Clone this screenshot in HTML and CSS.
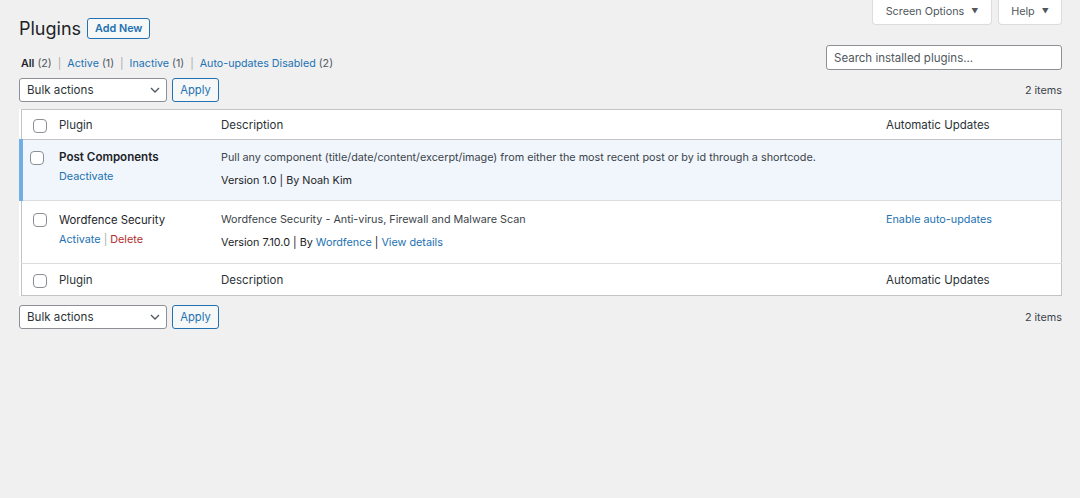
FILE: index.html
```html
<!DOCTYPE html>
<html lang="en">
<head>
<meta charset="utf-8">
<title>Plugins</title>
<link rel="stylesheet" href="styles.css">
</head>
<body>
<div class="page">
  <div class="head">
    <div class="head-left">
      <div class="title-row">
        <h1 class="title">Plugins</h1>
        <a class="btn-outline" href="#">Add New</a>
      </div>
      <ul class="subsubsub">
        <li><a class="current" href="#">All</a> <span class="count">(2)</span><span class="sep">|</span></li>
        <li><a href="#">Active</a> <span class="count">(1)</span><span class="sep">|</span></li>
        <li><a href="#">Inactive</a> <span class="count">(1)</span><span class="sep">|</span></li>
        <li><a href="#">Auto-updates Disabled</a> <span class="count">(2)</span></li>
      </ul>
    </div>
    <div class="head-right">
      <div class="meta-links">
        <button class="meta-btn meta-screen">Screen Options <span class="tri">▼</span></button>
        <button class="meta-btn meta-help">Help <span class="tri">▼</span></button>
      </div>
      <input class="search" type="search" placeholder="Search installed plugins...">
    </div>
  </div>

  <div class="tablenav top">
    <div class="select-wrap">
      <select class="select"><option>Bulk actions</option></select>
      <svg class="chev" viewBox="0 0 10 6" width="10" height="6"><path d="M1 1l4 4 4-4" fill="none" stroke="#50575e" stroke-width="1.3"/></svg>
    </div>
    <button class="btn-apply">Apply</button>
    <span class="items">2 items</span>
  </div>

  <table class="plugins">
    <colgroup>
      <col class="c-cb"><col class="c-name"><col class="c-desc"><col class="c-auto">
    </colgroup>
    <thead>
      <tr>
        <td class="cb"><input type="checkbox" class="chk"></td>
        <th class="hd">Plugin</th>
        <th class="hd">Description</th>
        <th class="hd">Automatic Updates</th>
      </tr>
    </thead>
    <tbody>
      <tr class="active">
        <th class="cb"><input type="checkbox" class="chk"></th>
        <td class="name">
          <strong class="pname">Post Components</strong>
          <div class="actions"><a href="#">Deactivate</a></div>
        </td>
        <td class="desc">
          <p class="d1">Pull any component (title/date/content/excerpt/image) from either the most recent post or by id through a shortcode.</p>
          <p class="d2">Version 1.0 | By Noah Kim</p>
        </td>
        <td class="auto"></td>
      </tr>
      <tr class="inactive">
        <th class="cb"><input type="checkbox" class="chk"></th>
        <td class="name">
          <span class="pname-in">Wordfence Security</span>
          <div class="actions"><a href="#">Activate</a> <span class="bar">|</span> <a class="del" href="#">Delete</a></div>
        </td>
        <td class="desc">
          <p class="d1">Wordfence Security - Anti-virus, Firewall and Malware Scan</p>
          <p class="d2">Version 7.10.0 | By <a href="#">Wordfence</a> | <a href="#">View details</a></p>
        </td>
        <td class="auto"><a href="#">Enable auto-updates</a></td>
      </tr>
    </tbody>
    <tfoot>
      <tr>
        <td class="cb"><input type="checkbox" class="chk"></td>
        <th class="hd">Plugin</th>
        <th class="hd">Description</th>
        <th class="hd">Automatic Updates</th>
      </tr>
    </tfoot>
  </table>

  <div class="tablenav bottom">
    <div class="select-wrap">
      <select class="select"><option>Bulk actions</option></select>
      <svg class="chev" viewBox="0 0 10 6" width="10" height="6"><path d="M1 1l4 4 4-4" fill="none" stroke="#50575e" stroke-width="1.3"/></svg>
    </div>
    <button class="btn-apply">Apply</button>
    <span class="items">2 items</span>
  </div>
</div>
</body>
</html>
```

FILE: styles.css
```css
* { box-sizing: border-box; }
html, body { margin: 0; padding: 0; }
body {
  background: #f0f0f1;
  color: #1d2327;
  font-family: Inter, "Liberation Sans", Arial, sans-serif;
  font-size: 10.8px;
  line-height: 16px;
}
a { color: #2271b1; text-decoration: none; }

.page { padding: 0 18px 0 19px; }

.head { display: flex; justify-content: space-between; align-items: flex-start; }
.head-left { padding-top: 18px; }
.title-row { display: flex; align-items: center; height: 21px; }
.title {
  margin: 0;
  font-size: 18px;
  font-weight: 400;
  line-height: 21px;
  color: #1d2327;
}
.btn-outline {
  margin-left: 6px;
  height: 21px;
  padding: 0 7px;
  display: inline-flex;
  align-items: center;
  border: 1px solid #2271b1;
  border-radius: 3px;
  background: #f6f7f7;
  font-weight: 600;
  font-size: 10.8px;
  color: #2271b1;
}
.subsubsub {
  list-style: none;
  margin: 17px 0 0 2px;
  padding: 0;
  display: flex;
  font-size: 10.7px;
  line-height: 16px;
  color: #646970;
}
.subsubsub li { white-space: nowrap; }
.subsubsub .current { color: #1d2327; font-weight: 600; }
.subsubsub .count { color: #50575e; }
.subsubsub .sep { color: #a7aaad; margin: 0 6px; }

.head-right { display: flex; flex-direction: column; align-items: flex-end; }
.meta-links { display: flex; gap: 6px; }
.meta-btn {
  height: 25px;
  border: 1px solid #dcdcde;
  border-top: none;
  border-radius: 0 0 4px 4px;
  background: #fff;
  color: #50575e;
  font-family: inherit;
  font-size: 10.8px;
  padding: 0 0 2px;
  cursor: pointer;
}
.meta-screen { width: 120px; }
.meta-help { width: 64px; }
.tri { font-size: 7px; margin-left: 4px; vertical-align: 1px; }
.search {
  margin-top: 20px;
  width: 236px;
  height: 25px;
  border: 1px solid #8c8f94;
  border-radius: 3px;
  background: #fff;
  padding: 0 7px;
  font-family: inherit;
  font-size: 11.5px;
  color: #2c3338;
}
.search::placeholder { color: #50575e; }

.tablenav { display: flex; align-items: center; height: 24px; }
.tablenav.top { margin-top: 6px; }
.tablenav.bottom { margin-top: 9px; }
.select-wrap { position: relative; width: 148px; height: 24px; }
.select {
  appearance: none;
  -webkit-appearance: none;
  width: 100%;
  height: 100%;
  border: 1px solid #8c8f94;
  border-radius: 3px;
  background: #fff;
  color: #2c3338;
  font-family: inherit;
  font-size: 11.6px;
  padding: 0 7px;
}
.chev { position: absolute; right: 7px; top: 9px; pointer-events: none; }
.btn-apply {
  margin-left: 5px;
  width: 47px;
  height: 24px;
  border: 1px solid #2271b1;
  border-radius: 3px;
  background: #f6f7f7;
  color: #2271b1;
  font-family: inherit;
  font-size: 11.2px;
  padding: 0;
}
.items { margin-left: auto; padding-top: 2px; font-size: 10.8px; color: #3c434a; }

.plugins {
  margin-top: 7px;
  width: 100%;
  border-collapse: collapse;
  table-layout: fixed;
  background: #fff;
  border: 1px solid #c3c4c7;
}
.c-cb { width: 29px; }
.c-name { width: 162px; }
.c-desc { width: 665px; }
.c-auto { width: auto; }
.plugins th, .plugins td { padding: 0; text-align: left; vertical-align: top; font-weight: 400; }
.plugins thead tr { height: 30px; border-bottom: 1px solid #c3c4c7; }
.plugins tfoot tr { height: 32px; border-top: 1px solid #c3c4c7; }
.plugins thead th, .plugins tfoot th,
.plugins thead td, .plugins tfoot td { vertical-align: middle; }
.hd { padding-left: 9px !important; color: #2c3338; font-size: 11.5px; }
.plugins .cb { padding-left: 11px; }
.chk {
  appearance: none;
  -webkit-appearance: none;
  margin: 0;
  width: 14px;
  height: 14px;
  border: 1px solid #8c8f94;
  border-radius: 4px;
  background: #fff;
  display: block;
}
.plugins thead .chk, .plugins tfoot .chk { margin-top: 2px; }

.plugins tbody tr { border-bottom: 1px solid #dcdcde; }
.plugins tbody tr.active { background: #f0f6fc; height: 61px; }
.plugins tbody tr.inactive { height: 63px; }
.plugins tbody tr.active .cb { border-left: 4px solid #72aee6; padding-left: 7px; }
.plugins tbody .cb { padding-top: 11px; }
.plugins tbody tr.inactive .cb { padding-top: 12px; }
.name { padding: 9px 0 0 9px !important; }
.inactive .name { padding-top: 11px !important; }
.pname { font-weight: 600; font-size: 11.6px; color: #1d2327; }
.pname-in { font-size: 11.3px; color: #1d2327; }
.actions { margin-top: 3px; font-size: 10.8px; }
.actions .bar { color: #a7aaad; }
.actions .del { color: #b32d2e; }
.desc { padding: 10px 0 0 9px !important; }
.inactive .desc { padding-top: 11px !important; }
.desc p { margin: 0; font-size: 10.8px; }
.d1 { color: #3c434a; }
.d2 { margin-top: 7px !important; color: #1d2327; }
.auto { padding: 11px 0 0 9px !important; font-size: 10.8px; }
```
